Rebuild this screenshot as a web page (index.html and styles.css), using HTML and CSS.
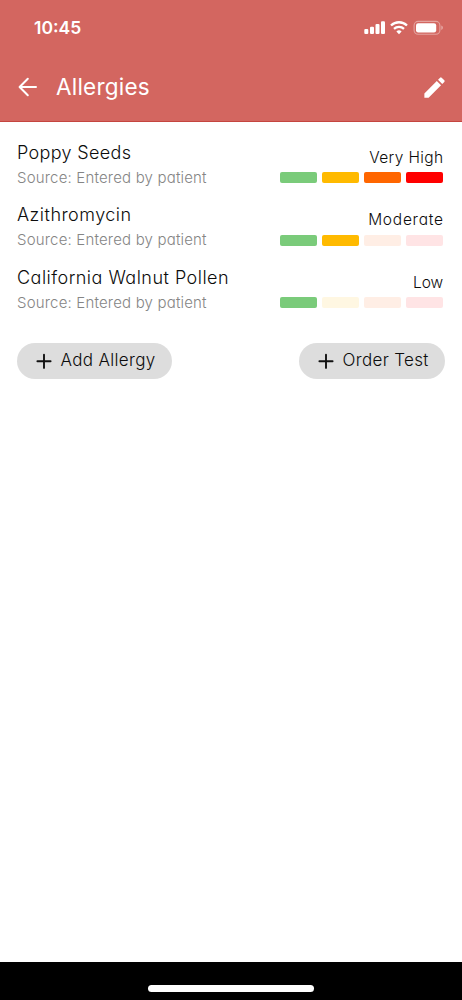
FILE: index.html
```html
<!DOCTYPE html>
<html lang="en">
<head>
    <title>Allergies</title>
    <meta charset="utf-8">
    <meta name="viewport" content="width=device-width, initial-scale=1">
    <link rel="stylesheet" href="styles.css">
</head>
<body>
    <header>
        <div class="status">
            <span class="time">10:45</span>
            <svg class="status-icons" width="80" height="16" viewBox="0 0 80 16">
                <g fill="#fff">
                    <rect x="0.3" y="9" width="4" height="5" rx="1.1"/>
                    <rect x="6" y="6.8" width="4" height="7.2" rx="1.1"/>
                    <rect x="11.5" y="4" width="4" height="10" rx="1.1"/>
                    <rect x="17" y="1.2" width="4" height="12.8" rx="1.1"/>
                    <path d="M35 14.2l-2.6-2.7a3.8 3.8 0 0 1 5.2 0z"/>
                </g>
                <g fill="none" stroke="#fff" stroke-width="2.3">
                    <path d="M27 5.5a11.5 11.5 0 0 1 16 0"/>
                    <path d="M30 8.9a7.3 7.3 0 0 1 10 0"/>
                </g>
                <rect x="50.1" y="1.4" width="25.8" height="12.8" rx="4" fill="none" stroke="#fff" stroke-opacity=".4" stroke-width="1.1"/>
                <rect x="52" y="3.2" width="20.2" height="9.2" rx="2.2" fill="#fff"/>
                <path d="M77.3 5.6q1.6.6 1.6 2.2t-1.6 2.2z" fill="#fff" fill-opacity=".45"/>
            </svg>
        </div>
        <div class="bar">
            <svg class="back" width="20" height="20" viewBox="0 0 20 20">
                <path d="M18 10H2M9.8 1.8L1.6 10l8.2 8.2" fill="none" stroke="#fff" stroke-width="2" stroke-linecap="round" stroke-linejoin="round"/>
            </svg>
            <h1>Allergies</h1>
            <svg class="edit" width="27" height="27" viewBox="0 0 24 24">
                <path fill="#fff" d="M3 17.25V21h3.75L17.81 9.94l-3.75-3.75L3 17.25zM20.71 7.04a1 1 0 0 0 0-1.41l-2.34-2.34a1 1 0 0 0-1.41 0l-1.83 1.83 3.75 3.75 1.83-1.83z"/>
            </svg>
        </div>
    </header>

    <main>
        <div class="allergy">
            <div>
                <div class="name">Poppy Seeds</div>
                <div class="source">Source: Entered by patient</div>
            </div>
            <div class="severity">
                <div class="level">Very High</div>
                <div class="meter">
                    <i class="low"></i><i class="moderate"></i><i class="high"></i><i class="very-high"></i>
                </div>
            </div>
        </div>
        <div class="allergy">
            <div>
                <div class="name wide">Azithromycin</div>
                <div class="source">Source: Entered by patient</div>
            </div>
            <div class="severity">
                <div class="level wide">Moderate</div>
                <div class="meter">
                    <i class="low"></i><i class="moderate"></i><i class="high off"></i><i class="very-high off"></i>
                </div>
            </div>
        </div>
        <div class="allergy">
            <div>
                <div class="name wide">California Walnut Pollen</div>
                <div class="source">Source: Entered by patient</div>
            </div>
            <div class="severity">
                <div class="level tight">Low</div>
                <div class="meter">
                    <i class="low"></i><i class="moderate off"></i><i class="high off"></i><i class="very-high off"></i>
                </div>
            </div>
        </div>

        <div class="actions">
            <button class="add">
                <svg width="16" height="16" viewBox="0 0 16 16"><path d="M8 1.7v13.2M1.4 8.3h13.2" stroke="#111" stroke-width="1.9" stroke-linecap="round"/></svg>
                <span>Add Allergy</span>
            </button>
            <button class="order">
                <svg width="16" height="16" viewBox="0 0 16 16"><path d="M8 1.7v13.2M1.4 8.3h13.2" stroke="#111" stroke-width="1.9" stroke-linecap="round"/></svg>
                <span>Order Test</span>
            </button>
        </div>
    </main>

    <footer><div class="home"></div></footer>
</body>
</html>
```

FILE: styles.css
```css
*{
    box-sizing:border-box;
}
body{
    margin:0;
    height:1000px;
    display:flex;
    flex-direction:column;
    background:#fff;
    color:#0c0c0c;
    font-family:Inter, "Liberation Sans", sans-serif;
    font-weight:300;
    /* single-storey a */
    font-feature-settings:"cv11";
    white-space:nowrap;
}
header{
    height:122px;
    background:#d36660;
    border-bottom:1.5px solid #c5453f;
    color:#fff;
}
.status{
    height:56px;
    padding:0 18px 0 34px;
    display:flex;
    align-items:center;
    justify-content:space-between;
}
.time{
    padding-bottom:2px;
    font-size:17.5px;
    font-weight:600;
}
.bar{
    height:64px;
    padding:0 14px 2px 18px;
    display:flex;
    align-items:center;
}
h1{
    margin:0 auto 0 18px;
    font-size:22.5px;
    line-height:30px;
    font-weight:400;
    letter-spacing:.22px;
}
main{
    flex:1;
    padding:17.5px 17px 0;
}
.allergy{
    height:62.5px;
    display:flex;
    justify-content:space-between;
}
.name{
    font-size:18px;
    line-height:25px;
    letter-spacing:.33px;
}
.name.wide{
    letter-spacing:.48px;
}
.source{
    margin-top:1px;
    font-size:15px;
    line-height:24px;
    letter-spacing:.18px;
    color:#858585;
}
.severity{
    width:163px;
    margin-right:2px;
    padding-top:7px;
}
.level{
    margin-right:-.4px;
    font-size:15.5px;
    line-height:22px;
    letter-spacing:.35px;
    text-align:right;
}
.level.wide{
    margin-right:-.75px;
    letter-spacing:.75px;
}
.level.tight{
    margin-right:0;
    letter-spacing:-.1px;
}
.meter{
    margin-top:3.5px;
    display:grid;
    grid-template-columns:repeat(4, 1fr);
    gap:4.5px;
}
.meter i{
    height:11px;
    border-radius:2px;
}
.low{
    background:#7acb7a;
}
.moderate{
    background:#ffba00;
}
.high{
    background:#ff6600;
}
.very-high{
    background:#ff0000;
}
.moderate.off{
    background:#fff7e2;
}
.high.off{
    background:#ffeee5;
}
.very-high.off{
    background:#ffe4e5;
}
.actions{
    margin-top:15.5px;
    display:flex;
    justify-content:space-between;
}
button{
    height:36.5px;
    padding:0 0 0 18.5px;
    display:flex;
    align-items:center;
    gap:9px;
    border:0;
    border-radius:19px;
    background:#ddd;
    color:inherit;
    font:inherit;
    font-size:17px;
    font-feature-settings:inherit;
    letter-spacing:.33px;
}
button span{
    padding-bottom:1.5px;
}
.add{
    width:155px;
}
.order{
    width:146px;
}
footer{
    height:38px;
    padding-top:23px;
    background:#000;
}
.home{
    width:166px;
    height:6.5px;
    margin:0 auto;
    border-radius:4px;
    background:#fff;
}
```
